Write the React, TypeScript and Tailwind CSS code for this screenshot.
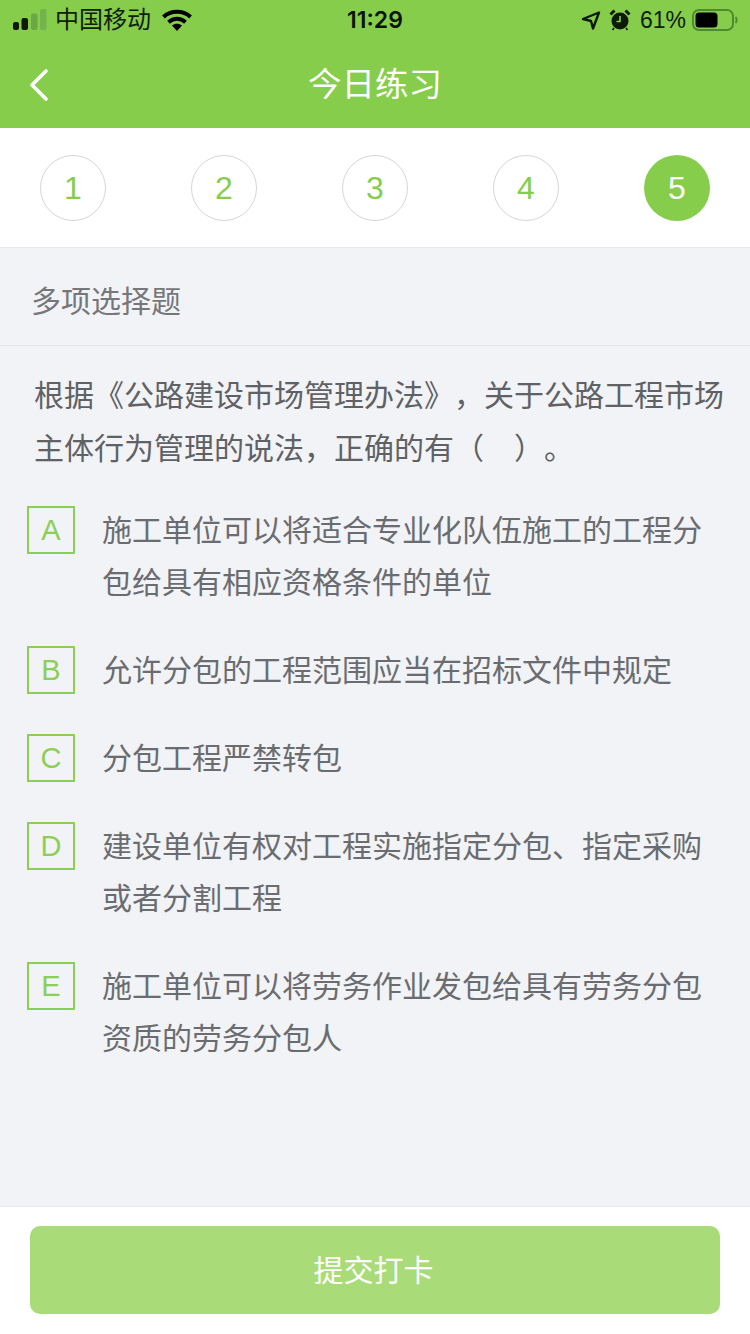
const steps = [1, 2, 3, 4, 5];

const options = [
  { key: "A", text: "施工单位可以将适合专业化队伍施工的工程分包给具有相应资格条件的单位" },
  { key: "B", text: "允许分包的工程范围应当在招标文件中规定" },
  { key: "C", text: "分包工程严禁转包" },
  { key: "D", text: "建设单位有权对工程实施指定分包、指定采购或者分割工程" },
  { key: "E", text: "施工单位可以将劳务作业发包给具有劳务分包资质的劳务分包人" },
];

const cjk = "font-['Liberation_Sans','Noto_Sans_CJK_SC',sans-serif]";

const StatusBar = () => (
  <div className="relative flex h-[40px] items-center justify-between pl-[13px] pr-[12px] text-[#10200a]">
    <div className="flex items-center">
      <svg width="34" height="22" viewBox="0 0 34 22" className="mr-[8px]">
        <rect x="0" y="13" width="6" height="8" rx="2" fill="#0d1a08" />
        <rect x="8.5" y="9" width="6.5" height="12" rx="2" fill="#0d1a08" />
        <rect x="18" y="4.5" width="6.5" height="16.5" rx="2" fill="#6ba845" />
        <rect x="27" y="0" width="6.5" height="21" rx="2" fill="#74b54b" />
      </svg>
      <span className="text-[24px] leading-none">中国移动</span>
      <svg width="30" height="23" viewBox="0 0 30 23" className="ml-[11px]">
        <path d="M1.5 8C8.5 1 21.5 1 28.5 8" fill="none" stroke="#000" strokeWidth="4" />
        <path d="M6.5 13.2C11.5 8.6 18.5 8.6 23.5 13.2" fill="none" stroke="#000" strokeWidth="4" />
        <path d="M10 16.5C13 14 17 14 20 16.5L15 22Z" fill="#000" />
      </svg>
    </div>
    <span className="absolute left-0 right-0 text-center font-['Inter'] text-[23px] font-semibold leading-none text-[#0a1406]">11:29</span>
    <div className="flex items-center">
      <svg width="20" height="20" viewBox="0 0 20 20" className="mr-[8px]">
        <path d="M18 2.5L2 9L10 11L12 18.5Z" fill="none" stroke="#0d1a08" strokeWidth="2.4" strokeLinejoin="round" />
      </svg>
      <svg width="22" height="22" viewBox="0 0 22 22" className="mr-[9px]">
        <circle cx="11" cy="12" r="8.5" fill="#0d1a08" />
        <path d="M11 7V12.5H7.5" fill="none" stroke="#86cd4c" strokeWidth="1.6" />
        <path d="M1.5 5.5L5.5 1.5M20.5 5.5L16.5 1.5" stroke="#0d1a08" strokeWidth="3" />
        <path d="M5 19L3.5 21M17 19L18.5 21" stroke="#0d1a08" strokeWidth="1.6" />
      </svg>
      <span className="text-[23px] leading-none">61%</span>
      <svg width="46" height="24" viewBox="0 0 46 24" className="ml-[6px]">
        <rect x="1" y="2" width="40" height="20" rx="6" fill="none" stroke="#4f8a30" strokeWidth="2" />
        <rect x="3.5" y="4.5" width="22" height="15" rx="3.5" fill="#000" />
        <path d="M43.5 9C45 10 45 14 43.5 15" fill="none" stroke="#4f8a30" strokeWidth="2" />
      </svg>
    </div>
  </div>
);

export default function App() {
  return (
    <div className={`flex h-[1334px] w-[750px] flex-col overflow-hidden bg-[#f2f3f6] [text-spacing-trim:space-all] ${cjk}`}>
      <div className="bg-[#86cd4c]">
        <StatusBar />
        <div className="relative flex h-[88px] items-center justify-center">
          <svg width="20" height="34" viewBox="0 0 20 34" className="absolute left-[29px] top-[28px]">
            <path d="M17 3L3 17L17 31" fill="none" stroke="#fff" strokeWidth="3.6" strokeLinecap="round" strokeLinejoin="round" />
          </svg>
          <h1 className="pt-[2px] text-[33.5px] font-normal leading-none text-white">今日练习</h1>
        </div>
      </div>

      <div className="flex h-[120px] items-center justify-between border-b border-[#e8e9ec] bg-white px-[40px]">
        {steps.map((n) => (
          <div
            key={n}
            className={
              n === 5
                ? "flex h-[66px] w-[66px] items-center justify-center rounded-full bg-[#86cd4c] text-[32px] text-white"
                : "flex h-[66px] w-[66px] items-center justify-center rounded-full border border-[#d6d6d6] bg-white text-[32px] text-[#86cd4c]"
            }
          >
            {n}
          </div>
        ))}
      </div>

      <div className="flex h-[98px] items-center border-b border-[#e6e7ea] pl-[31px] pt-[10px] text-[30px] leading-none text-[#75777b]">
        多项选择题
      </div>

      <p className="pl-[34px] pr-[20px] pt-[23px] text-[30px] leading-[53px] text-[#5f6164]">
        根据《公路建设市场管理办法》，关于公路工程市场主体行为管理的说法，正确的有（　）。
      </p>

      <div className="mt-[30px] flex flex-col gap-[36px] pl-[27px] pr-[46px]">
        {options.map((o) => (
          <div key={o.key} className="flex items-start">
            <div className="mt-[1px] flex h-[48px] w-[48px] shrink-0 items-center justify-center border-2 border-[#8ccf57] pt-[1px] text-[29px] leading-none text-[#8ccf57]">
              {o.key}
            </div>
            <div className="ml-[27px] text-[30px] leading-[52px] text-[#6a6c70]">{o.text}</div>
          </div>
        ))}
      </div>

      <div className="mt-auto h-[128px] border-t border-[#e9eaee] bg-white px-[30px] pt-[19px]">
        <button className="flex h-[88px] w-full items-center justify-center rounded-[10px] bg-[#a9dc79] pr-[3px] text-[30px] text-white">
          提交打卡
        </button>
      </div>
    </div>
  );
}
